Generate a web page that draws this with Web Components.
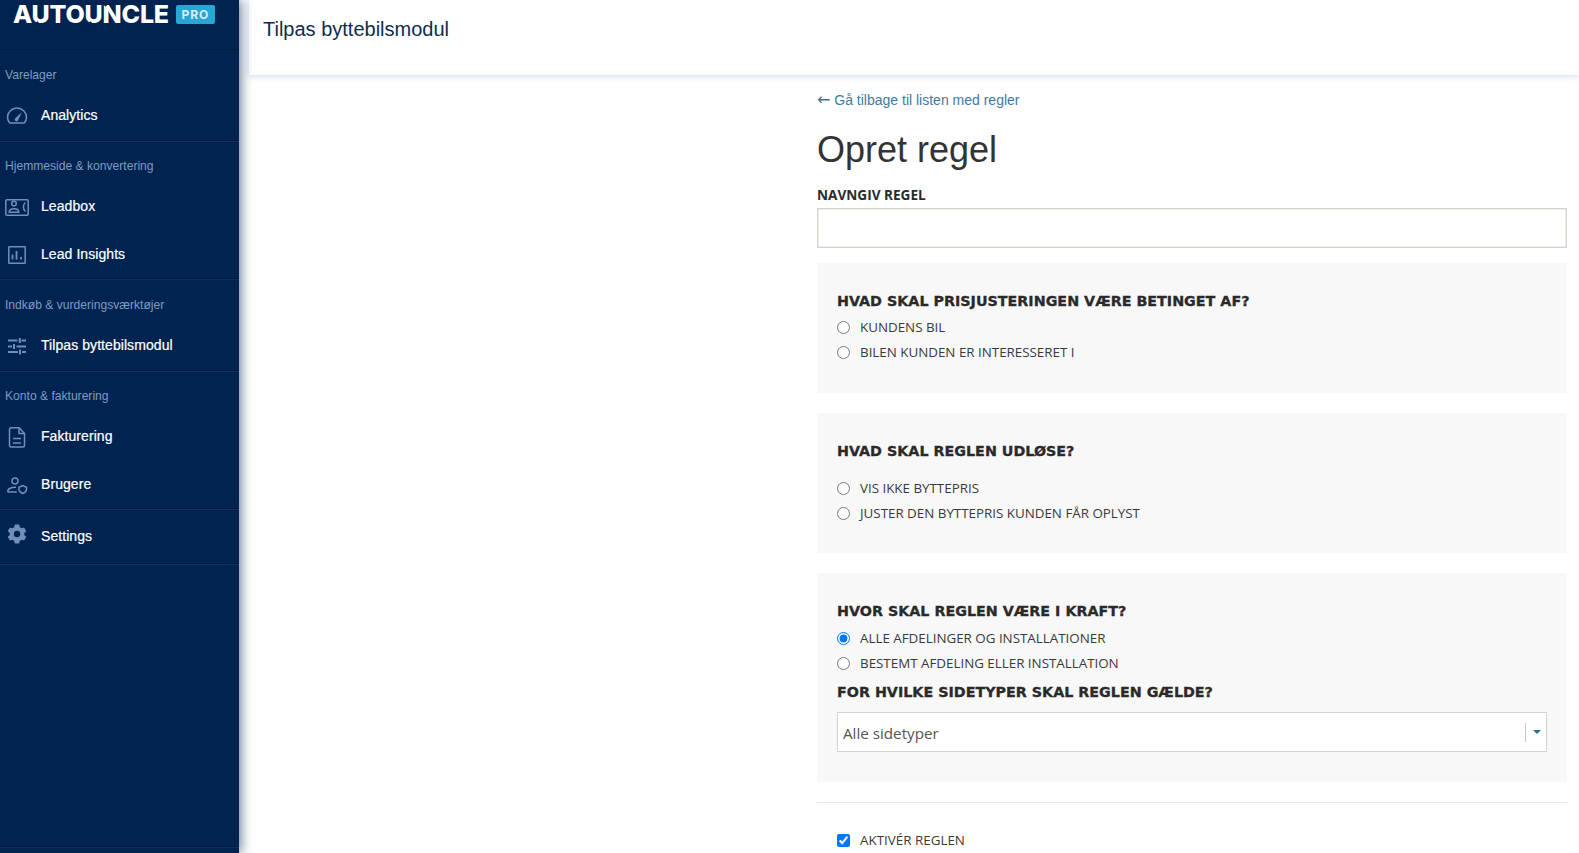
<!DOCTYPE html>
<html lang="da">
<head>
<meta charset="utf-8">
<title>Opret regel</title>
<style>
  html, body { margin: 0; height: 100%; overflow: hidden; background: #fff; }
</style>
</head>
<body>
<app-shell>
  <side-nav slot="nav">
    <nav-section label="Varelager">
      <nav-item icon="gauge">Analytics</nav-item>
    </nav-section>
    <nav-section double label="Hjemmeside &amp; konvertering">
      <nav-item icon="contact">Leadbox</nav-item>
      <nav-item icon="chart">Lead Insights</nav-item>
    </nav-section>
    <nav-section label="Indkøb &amp; vurderingsværktøjer">
      <nav-item icon="sliders">Tilpas byttebilsmodul</nav-item>
    </nav-section>
    <nav-section double label="Konto &amp; fakturering">
      <nav-item icon="file">Fakturering</nav-item>
      <nav-item icon="users">Brugere</nav-item>
    </nav-section>
    <nav-section>
      <nav-item icon="gear">Settings</nav-item>
    </nav-section>
  </side-nav>
  <top-bar slot="top">Tilpas byttebilsmodul</top-bar>
  <rule-form>
    <form-panel heading="Hvad skal prisjusteringen være betinget af?" gap="4" style="padding-bottom: 28px">
      <radio-row name="a">Kundens bil</radio-row>
      <radio-row name="a">Bilen kunden er interesseret i</radio-row>
    </form-panel>
    <form-panel heading="Hvad skal reglen udløse?" gap="15">
      <radio-row name="b">Vis ikke byttepris</radio-row>
      <radio-row name="b">Juster den byttepris kunden får oplyst</radio-row>
    </form-panel>
    <form-panel heading="Hvor skal reglen være i kraft?">
      <radio-row name="c" checked>Alle afdelinger og installationer</radio-row>
      <radio-row name="c">Bestemt afdeling eller installation</radio-row>
      <type-select heading="For hvilke sidetyper skal reglen gælde?" value="Alle sidetyper"></type-select>
    </form-panel>
  </rule-form>
</app-shell>

<script>
// six tooth cog, same shape as the one in the sidebar
function gearPath() {
  const pt = (r, deg) => {
    const a = deg * Math.PI / 180;
    return (12 + r * Math.cos(a)).toFixed(2) + ' ' + (12 + r * Math.sin(a)).toFixed(2);
  };
  let d = '';
  for (let i = 0; i < 6; i++) {
    const c = i * 60 - 90;
    d += (i ? 'L' : 'M') + pt(8.6, c - 23) + 'L' + pt(11.4, c - 13) + 'L' + pt(11.4, c + 13) + 'L' + pt(8.6, c + 23);
  }
  return d + 'ZM12 8.200a3.800 3.800 0 1 0 0 7.600a3.800 3.800 0 1 0 0-7.600Z';
}

const ICONS = {
  gauge: '<path d="M4.800 20h14.400c1.300-1.500 2.300-3.500 2.300-5.500a9.500 9.500 0 0 0-19 0c0 2 1 4 2.300 5.500z"/><path fill="#7090b8" stroke="none" d="M10 15.500 16.800 9.200 13 17.500a1.700 1.700 0 0 1-3-2z"/>',
  contact: '<rect x=".8" y="5.800" width="22.400" height="15.400" rx="1"/><circle cx="9" cy="9.600" r="2.300"/><path d="M4.200 18.300c0-2.500 2-3.500 4.800-3.500s4.800 1 4.800 3.500z"/><path d="M20.500 8.500c-2.800 2-2.800 7 0 9"/>',
  chart: '<rect x="3.800" y="4.800" width="16.400" height="16.400" rx=".5"/><path d="M7.500 17.500v-5M11.500 17.500V9M16 17.500v-2.500" stroke-width="1.800"/>',
  sliders: '<path d="M3 7.500h9.500M16.500 7.500H21M14.800 5v5M3 13.500h4M9 11v5M11.500 13.500H21M3 19h10M17 19h4M15 16.500v5" stroke-width="2"/>',
  file: '<path d="M6 3.800h8.200l5.300 5.700V21.500a1.500 1.500 0 0 1-1.500 1.500H6a1.500 1.500 0 0 1-1.500-1.500V5.300A1.500 1.500 0 0 1 6 3.800z"/><path d="M14 3.800v5.700h5.500M8 14.500h8M8 19h8"/>',
  users: '<circle cx="10" cy="9" r="3"/><path d="M2.800 20h9M2.800 20c-.6-3 3-4.800 8.200-4.800"/><path d="M14 15.200l3.800-1.700 3.700 1.700v2.300c0 1.800-1.600 3-3.700 4-2.200-1-3.800-2.200-3.800-4z"/>'
};

class AppShell extends HTMLElement {
  constructor() {
    super();
    this.attachShadow({ mode: 'open' }).innerHTML = `
      <style>
        :host {
          display: grid;
          grid-template-columns: 239px 1fr;
          grid-template-rows: 75px 1fr;
          height: 853px;
          overflow: hidden;
        }
        ::slotted([slot="nav"]) { grid-row: 1 / 3; z-index: 2; }
        .right { padding-left: 10px; min-width: 0; }
      </style>
      <slot name="nav"></slot>
      <div class="right"><slot name="top"></slot></div>
      <div class="right"><slot></slot></div>
    `;
  }
}

class SideNav extends HTMLElement {
  constructor() {
    super();
    this.attachShadow({ mode: 'open' }).innerHTML = `
      <style>
        :host {
          display: flex;
          flex-direction: column;
          background: #01234f;
          box-shadow: 2px 0 11px rgba(1, 35, 79, .6);
          height: 853px;
          font-family: "Liberation Sans", Arial, sans-serif;
        }
        .brand {
          display: flex;
          align-items: center;
          gap: 7px;
          height: 50px;
          box-sizing: border-box;
          padding: 5px 0 26px 13px;
          border-bottom: 1px solid #001a3d;
        }
        .word {
          color: #fff;
          font: 800 25px/19px Inter, sans-serif;
          letter-spacing: -.2px;
        }
        .cut { position: relative; }
        .cut::after {
          content: "";
          position: absolute;
          left: 1px;
          width: 6px;
          height: 2px;
          background: #01234f;
          transform: rotate(-40deg);
        }
        .low::after { bottom: 4px; }
        .high::after { top: 4px; }
        .pro {
          background: #29a6d4;
          color: #d5eef8;
          border-radius: 2px;
          width: 39px;
          height: 19px;
          font: 700 12px/19px Inter, sans-serif;
          letter-spacing: 1px;
          text-align: center;
        }
        .foot {
          margin-top: auto;
          height: 6px;
          border-top: 1px solid #001a3d;
          box-shadow: inset 0 1px 0 #0c3160;
        }
      </style>
      <div class="brand"><span class="word">A<span class="cut low">U</span>TO<span class="cut low">U</span><span class="cut high">N</span>CLE</span><span class="pro">PRO</span></div>
      <slot></slot>
      <div class="foot"></div>
    `;
  }
}

class NavSection extends HTMLElement {
  constructor() {
    super();
    this.attachShadow({ mode: 'open' }).innerHTML = `
      <style>
        :host {
          display: block;
          border-bottom: 1px solid #001a3d;
          box-shadow: 0 1px 0 #0c3160;
        }
        :host([double]) { margin-bottom: 1px; }
        .label {
          color: #7f9cc2;
          font-size: 12.100px;
          line-height: 14px;
          padding: 18px 0 0 5px;
          height: 23px;
          display: block;
        }
        .items { padding-bottom: 1px; }
        :host([double]) .items { padding-bottom: 0; }
        :host(:not([label])) .label { display: none; }
        :host(:not([label])) .items { padding: 2px 0 3px; }
      </style>
      <span class="label"></span>
      <div class="items"><slot></slot></div>
    `;
    this.shadowRoot.querySelector('.label').textContent = this.getAttribute('label') || '';
  }
}

class NavItem extends HTMLElement {
  constructor() {
    super();
    const name = this.getAttribute('icon');
    const icon = name === 'gear'
      ? `<path fill="#7090b8" stroke="none" fill-rule="evenodd" transform="translate(1.8 -.2) scale(.85)" d="${gearPath()}"/>`
      : ICONS[name];
    this.attachShadow({ mode: 'open' }).innerHTML = `
      <style>
        :host {
          display: flex;
          align-items: center;
          height: 48px;
          padding-left: 5px;
          color: #fff;
          font-size: 14px;
          letter-spacing: .07px;
          -webkit-text-stroke: .2px #fff;
        }
        svg {
          width: 24px;
          height: 24px;
          margin-right: 12px;
          fill: none;
          stroke: #7090b8;
          stroke-width: 1.500;
          flex: none;
          overflow: visible;
        }
      </style>
      <svg viewBox="0 0 24 24">${icon}</svg>
      <slot></slot>
    `;
  }
}

class TopBar extends HTMLElement {
  constructor() {
    super();
    this.attachShadow({ mode: 'open' }).innerHTML = `
      <style>
        :host {
          display: flex;
          align-items: center;
          height: 75px;
          box-sizing: border-box;
          padding: 0 0 17px 14px;
          color: #0f2c4f;
          font: 20px "Liberation Sans", Arial, sans-serif;
          box-shadow: 0 1px 6px rgba(120, 160, 205, .4);
        }
      </style>
      <slot></slot>
    `;
  }
}

class RuleForm extends HTMLElement {
  constructor() {
    super();
    this.attachShadow({ mode: 'open' }).innerHTML = `
      <style>
        :host {
          display: block;
          width: 750px;
          margin: 0 12px 0 auto;
          color: #333;
          font-family: "Liberation Sans", Arial, sans-serif;
        }
        .back {
          display: block;
          margin-top: 16px;
          color: #3f7a9f;
          font-size: 14px;
          line-height: 18px;
          text-decoration: none;
        }
        .arrow { font: 16px/18px "DejaVu Sans", sans-serif; color: #4b6f86; }
        h1 {
          margin: 19px 0 0;
          font-size: 36px;
          font-weight: 400;
          line-height: 44px;
        }
        label {
          display: block;
          margin-top: 13px;
          font: 700 13.600px/20px "Open Sans", sans-serif;
          color: #2b2b2b;
        }
        input[type="text"] {
          display: block;
          box-sizing: border-box;
          width: 100%;
          height: 40px;
          margin: 3px 0 15px;
          border: 1px solid #d6d3cc;
          box-shadow: inset 0 0 0 .5px #e0ddd7;
          background: #fff;
        }
        .stack { display: flex; flex-direction: column; gap: 20px; }
        hr {
          border: 0;
          border-top: 1px solid #e9e9e9;
          margin: 20px 0 25px;
        }
        .activate { padding-left: 20px; }
      </style>
      <a class="back" href="#"><span class="arrow">←</span> Gå tilbage til listen med regler</a>
      <h1>Opret regel</h1>
      <label>NAVNGIV REGEL</label>
      <input type="text">
      <div class="stack"><slot></slot></div>
      <hr>
      <div class="activate"><check-row checked>Aktivér reglen</check-row></div>
    `;
  }
}

class FormPanel extends HTMLElement {
  constructor() {
    super();
    const gap = this.getAttribute('gap') || 5;
    this.attachShadow({ mode: 'open' }).innerHTML = `
      <style>
        :host {
          display: block;
          background: #f8f8f8;
          padding: 28px 20px 27px;
        }
        h3 {
          margin: 0 0 ${gap}px;
          color: #2a2a2a;
          font: 700 14.300px/20px "DejaVu Sans", sans-serif;
          -webkit-text-stroke: .3px #2a2a2a;
          text-transform: uppercase;
        }
      </style>
      <h3></h3>
      <slot></slot>
    `;
    this.shadowRoot.querySelector('h3').textContent = this.getAttribute('heading');
  }
}

class RadioRow extends HTMLElement {
  constructor() {
    super();
    this.attachShadow({ mode: 'open' }).innerHTML = `
      <style>
        :host {
          display: block;
          color: #3a3a3a;
          font: 13.400px/25px "Open Sans", sans-serif;
          letter-spacing: -.02px;
          text-transform: uppercase;
        }
        label { display: flex; align-items: center; gap: 10px; height: 25px; }
        input { margin: 0; width: 13px; height: 13px; }
      </style>
      <label><input type="radio"><span><slot></slot></span></label>
    `;
    const input = this.shadowRoot.querySelector('input');
    input.name = this.getAttribute('name');
    input.checked = this.hasAttribute('checked');
  }
}

class CheckRow extends HTMLElement {
  constructor() {
    super();
    this.attachShadow({ mode: 'open' }).innerHTML = `
      <style>
        :host {
          display: block;
          color: #3a3a3a;
          font: 13.400px/25px "Open Sans", sans-serif;
          text-transform: uppercase;
        }
        label { display: flex; align-items: center; gap: 10px; height: 25px; }
        input { margin: 0; width: 13px; height: 13px; }
      </style>
      <label><input type="checkbox"><span><slot></slot></span></label>
    `;
    this.shadowRoot.querySelector('input').checked = this.hasAttribute('checked');
  }
}

class TypeSelect extends HTMLElement {
  constructor() {
    super();
    this.attachShadow({ mode: 'open' }).innerHTML = `
      <style>
        :host { display: block; margin-top: 6px; }
        h3 {
          margin: 0 0 10px;
          color: #2a2a2a;
          font: 700 14.300px/20px "DejaVu Sans", sans-serif;
          -webkit-text-stroke: .3px #2a2a2a;
          text-transform: uppercase;
        }
        .box {
          display: flex;
          align-items: center;
          box-sizing: border-box;
          height: 40px;
          background: #fff;
          border: 1px solid #d6d3cc;
          padding-left: 5px;
          color: #555;
          font: 15.200px "Open Sans", sans-serif;
          margin-bottom: 3px;
        }
        .value { flex: 1; padding-top: 2px; }
        .sep { width: 1px; height: 19px; background: #c9c9c4; }
        .arrow {
          width: 0;
          height: 0;
          margin: 0 5px 0 7px;
          border: 4px solid transparent;
          border-top: 4px solid #2a6f8f;
          border-bottom: 0;
        }
      </style>
      <h3></h3>
      <div class="box"><span class="value"></span><span class="sep"></span><span class="arrow"></span></div>
    `;
    this.shadowRoot.querySelector('h3').textContent = this.getAttribute('heading');
    this.shadowRoot.querySelector('.value').textContent = this.getAttribute('value');
  }
}

customElements.define('app-shell', AppShell);
customElements.define('side-nav', SideNav);
customElements.define('nav-section', NavSection);
customElements.define('nav-item', NavItem);
customElements.define('top-bar', TopBar);
customElements.define('rule-form', RuleForm);
customElements.define('form-panel', FormPanel);
customElements.define('radio-row', RadioRow);
customElements.define('check-row', CheckRow);
customElements.define('type-select', TypeSelect);
</script>
</body>
</html>
